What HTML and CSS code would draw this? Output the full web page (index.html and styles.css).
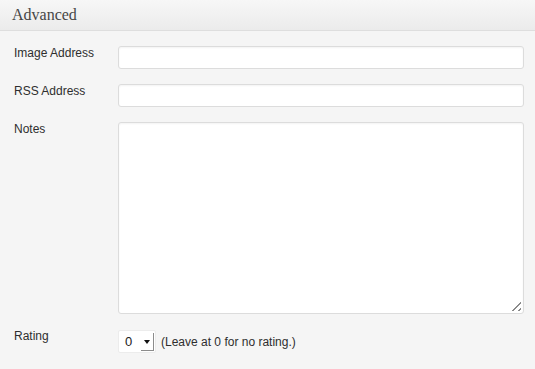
FILE: index.html
```html
<!DOCTYPE html>
<html lang="en">

<head>
    <meta charset="UTF-8">
    <meta name="viewport" content="width=device-width, initial-scale=1.0">
    <title>Advanced</title>
    <link rel="stylesheet" href="styles.css">
</head>

<body>
    <div class="box">
        <h3 class="box-title">Advanced</h3>
        <div class="box-body">
            <div class="row">
                <label class="row-label" for="image">Image Address</label>
                <input class="field" type="text" id="image">
            </div>
            <div class="row">
                <label class="row-label" for="rss">RSS Address</label>
                <input class="field" type="text" id="rss">
            </div>
            <div class="row">
                <label class="row-label" for="notes">Notes</label>
                <div class="area-wrap">
                    <textarea class="field area" id="notes"></textarea>
                    <span class="grip"></span>
                </div>
            </div>
            <div class="row row-rating">
                <label class="row-label">Rating</label>
                <div class="rating">
                    <span class="select"><span class="select-value">0</span><span class="select-arrow"></span></span>
                    <span class="hint">(Leave at 0 for no rating.)</span>
                </div>
            </div>
        </div>
    </div>
</body>

</html>
```

FILE: styles.css
```css
html, body {
    margin: 0;
    height: 100%;
}

body {
    background-color: #f5f5f5;
    font-family: "Liberation Sans", Arial, sans-serif;
    font-size: 12px;
    color: #2e2e2e;
}

.box {
    min-height: 100%;
    background-color: #f5f5f5;
}

.box-title {
    margin: 0;
    height: 31px;
    padding-left: 12px;
    line-height: 30px;
    font-family: "Liberation Serif", Georgia, serif;
    font-size: 16px;
    font-weight: normal;
    color: #464646;
    background-image: linear-gradient(to bottom, #f7f7f7, #ebebeb);
    border-bottom: 1px solid #dedede;
    box-sizing: border-box;
}

.box-body {
    padding: 15px 11px 0 14px;
}

.row {
    display: grid;
    grid-template-columns: 104px 1fr;
    align-items: start;
    margin-bottom: 15px;
}

.row-rating {
    margin-top: 2px;
}

.row-label {
    line-height: 14px;
}

.field {
    display: block;
    width: 100%;
    height: 23px;
    margin: 0;
    box-sizing: border-box;
    border: 1px solid #dcdcdc;
    border-radius: 3px;
    background-color: #fff;
    box-shadow: inset 0 1px 2px rgba(0, 0, 0, 0.05);
    outline: none;
}

.field.area {
    height: 192px;
    resize: none;
}

.area-wrap {
    position: relative;
}

.grip {
    position: absolute;
    right: 3px;
    bottom: 3px;
    width: 12px;
    height: 12px;
    background-image: repeating-linear-gradient(135deg, transparent 0, transparent 2.5px, #8a8a8a 2.5px, #8a8a8a 4px);
    clip-path: polygon(100% 0, 100% 100%, 0 100%);
}

.rating {
    display: flex;
    align-items: center;
    gap: 5px;
    padding-top: 1px;
}

.select {
    display: flex;
    align-items: center;
    width: 38px;
    height: 23px;
    box-sizing: border-box;
    background-color: #fff;
    border: 1px solid #ececec;
    border-radius: 2px;
}

.select-value {
    flex: 1;
    padding-left: 6px;
    font-size: 13px;
    color: #222;
}

.select-arrow {
    position: relative;
    width: 13px;
    height: 18px;
    margin-right: 1px;
    margin-top: 1px;
    box-sizing: border-box;
    border-right: 1px solid #8c8c8c;
    border-bottom: 1px solid #8c8c8c;
}

.select-arrow::after {
    content: "";
    position: absolute;
    left: 3px;
    top: 7px;
    border-left: 3px solid transparent;
    border-right: 3px solid transparent;
    border-top: 4px solid #111;
}

.hint {
    font-size: 12px;
}
```
